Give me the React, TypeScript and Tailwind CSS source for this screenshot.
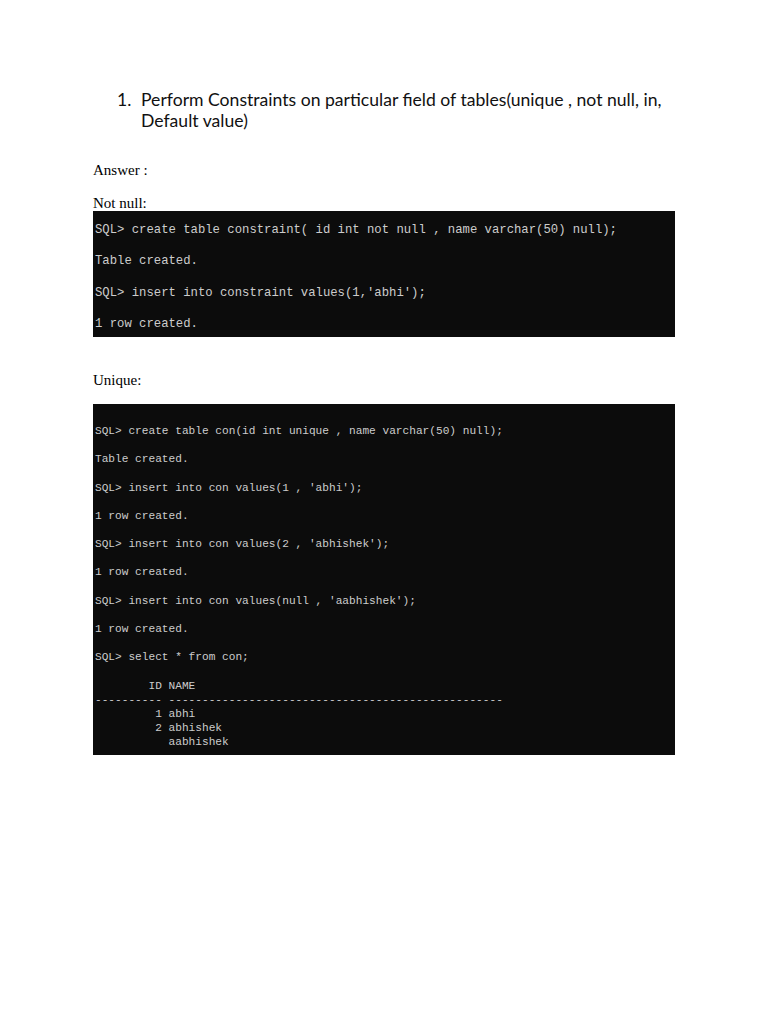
import React from 'react';

const notNullLines = [
  "SQL> create table constraint( id int not null , name varchar(50) null);",
  '',
  'Table created.',
  '',
  "SQL> insert into constraint values(1,'abhi');",
  '',
  '1 row created.',
];

const uniqueLines = [
  'SQL> create table con(id int unique , name varchar(50) null);',
  '',
  'Table created.',
  '',
  "SQL> insert into con values(1 , 'abhi');",
  '',
  '1 row created.',
  '',
  "SQL> insert into con values(2 , 'abhishek');",
  '',
  '1 row created.',
  '',
  "SQL> insert into con values(null , 'aabhishek');",
  '',
  '1 row created.',
  '',
  'SQL> select * from con;',
  '',
  '        ID NAME',
  '---------- --------------------------------------------------',
  '         1 abhi',
  '         2 abhishek',
  '           aabhishek',
];

const mono = "font-['Consolas','Liberation_Mono','DejaVu_Sans_Mono',monospace]";
const serif = "font-['Liberation_Serif','Times_New_Roman',serif]";

function Terminal({ lines, className }: { lines: string[]; className: string }) {
  return (
    <pre className={`bg-[#0c0c0c] text-[#cccccc] w-[582px] pl-[2px] whitespace-pre ${mono} ${className}`}>
      {lines.map((line, i) => (
        <div key={i}>{line || ' '}</div>
      ))}
    </pre>
  );
}

export default function App() {
  return (
    <div className="min-h-screen bg-white text-black pt-[89px] pl-[93px]">
      <div className="flex pl-[24px] font-['Lato','Open_Sans',sans-serif] text-[17.6px] leading-[21px] text-[#111]">
        <span className="w-[24px] shrink-0">1.</span>
        <p className="w-[540px]">
          Perform Constraints on particular field of tables(unique , not null, in, Default value)
        </p>
      </div>

      <p className={`${serif} text-[15px] leading-[16px] mt-[31px]`}>Answer :</p>
      <p className={`${serif} text-[15px] leading-[16px] mt-[17px]`}>Not null:</p>

      <Terminal lines={notNullLines} className="text-[12.25px] leading-[15.67px] pt-[12px] h-[126px]" />

      <p className={`${serif} text-[15px] leading-[16px] mt-[35px]`}>Unique:</p>

      <Terminal lines={uniqueLines} className="mt-[16px] text-[11.15px] leading-[14.14px] pt-[20px] h-[351px]" />
    </div>
  );
}
